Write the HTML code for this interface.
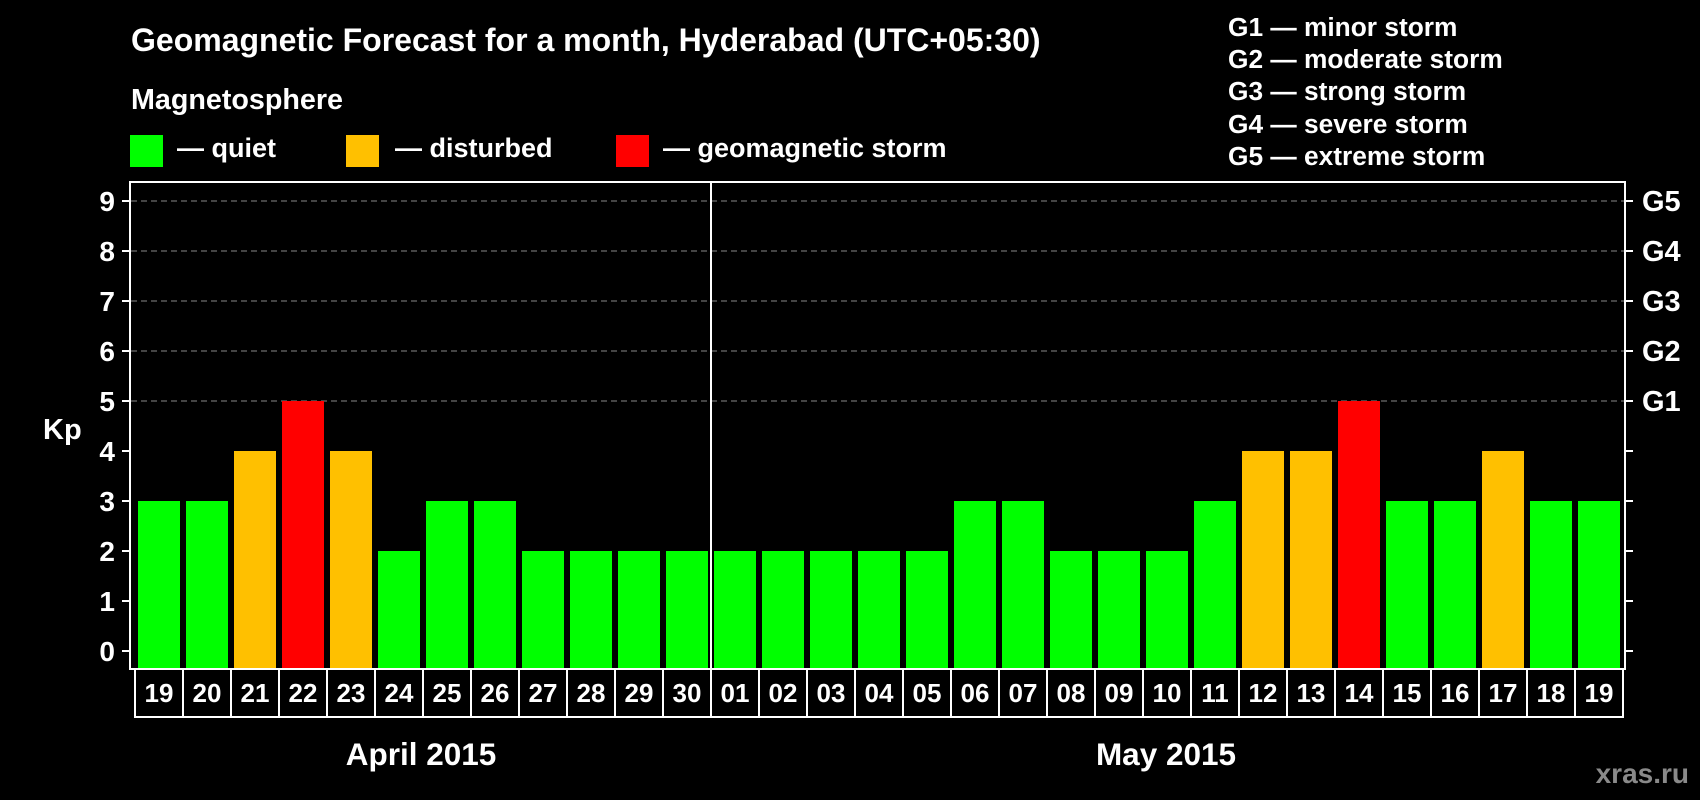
<!DOCTYPE html>
<html><head><meta charset="utf-8"><style>
html,body{margin:0;padding:0;background:#000;width:1700px;height:800px;overflow:hidden}
svg{display:block}
text{font-family:"Liberation Sans",Arial,sans-serif;font-weight:bold;fill:#fff}
</style></head><body>
<svg width="1700" height="800" viewBox="0 0 1700 800" xmlns="http://www.w3.org/2000/svg">
<rect width="1700" height="800" fill="#000"/>
<text x="131" y="51" font-size="32">Geomagnetic Forecast for a month, Hyderabad (UTC+05:30)</text>
<text x="131" y="109" font-size="28.7">Magnetosphere</text>
<rect x="130" y="135" width="33" height="32" fill="#00ff00"/>
<text x="177" y="157" font-size="27">— quiet</text>
<rect x="346" y="135" width="33" height="32" fill="#ffc000"/>
<text x="395" y="157" font-size="27">— disturbed</text>
<rect x="616" y="135" width="33" height="32" fill="#ff0000"/>
<text x="663" y="157" font-size="27">— geomagnetic storm</text>
<g font-size="26.3">
<text x="1228" y="36">G1 — minor storm</text>
<text x="1228" y="68">G2 — moderate storm</text>
<text x="1228" y="100">G3 — strong storm</text>
<text x="1228" y="133">G4 — severe storm</text>
<text x="1228" y="165">G5 — extreme storm</text>
</g>
<g stroke="#888" stroke-width="1" stroke-dasharray="6,4">
<line x1="131" y1="201" x2="1624" y2="201"/>
<line x1="131" y1="251" x2="1624" y2="251"/>
<line x1="131" y1="301" x2="1624" y2="301"/>
<line x1="131" y1="351" x2="1624" y2="351"/>
<line x1="131" y1="401" x2="1624" y2="401"/>
</g>
<g id="bars"></g>
<rect x="130" y="182" width="1495" height="487" fill="none" stroke="#fff" stroke-width="2"/>
<line x1="711" y1="182" x2="711" y2="669" stroke="#fff" stroke-width="2"/>
<g id="ticks" stroke="#fff" stroke-width="2"></g>
<g id="ylab" font-size="28" text-anchor="end"></g>
<g id="glab" font-size="29"></g>
<text x="43" y="439" font-size="29">Kp</text>
<g id="dates" font-size="26" text-anchor="middle"></g>
<rect x="135" y="669" width="1488" height="48" fill="none" stroke="#fff" stroke-width="2"/>
<text x="421" y="765" font-size="31.5" text-anchor="middle">April 2015</text>
<text x="1166" y="765" font-size="31.5" text-anchor="middle">May 2015</text>
<text x="1689" y="783" font-size="28" text-anchor="end" style="fill:#8a8a8a">xras.ru</text>
</svg>
<script>
var NS="http://www.w3.org/2000/svg";
function el(p,t,a,txt){var e=document.createElementNS(NS,t);for(var k in a)e.setAttribute(k,a[k]);if(txt!==undefined)e.textContent=txt;document.getElementById(p).appendChild(e);}
var v=[3,3,4,5,4,2,3,3,2,2,2,2,2,2,2,2,2,3,3,2,2,2,3,4,4,5,3,3,4,3,3];
var d=["19","20","21","22","23","24","25","26","27","28","29","30","01","02","03","04","05","06","07","08","09","10","11","12","13","14","15","16","17","18","19"];
for(var i=0;i<31;i++){
 var c=v[i]>=5?"#ff0000":v[i]==4?"#ffc000":"#00ff00";
 var x=138+48*i;
 el("bars","rect",{x:x,y:651-50*v[i],width:42,height:17+50*v[i],fill:c});
 el("dates","text",{x:x+21,y:702},d[i]);
 if(i>0)el("ticks","line",{x1:135+48*i,y1:669,x2:135+48*i,y2:717});
}
for(var k=0;k<=9;k++){
 var y=651-50*k;
 el("ticks","line",{x1:122,y1:y,x2:130,y2:y});
 el("ticks","line",{x1:1625,y1:y,x2:1633,y2:y});
 el("ylab","text",{x:115,y:y+10},String(k));
 if(k>=5)el("glab","text",{x:1642,y:y+10},"G"+(k-4));
}
</script>
</body></html>
